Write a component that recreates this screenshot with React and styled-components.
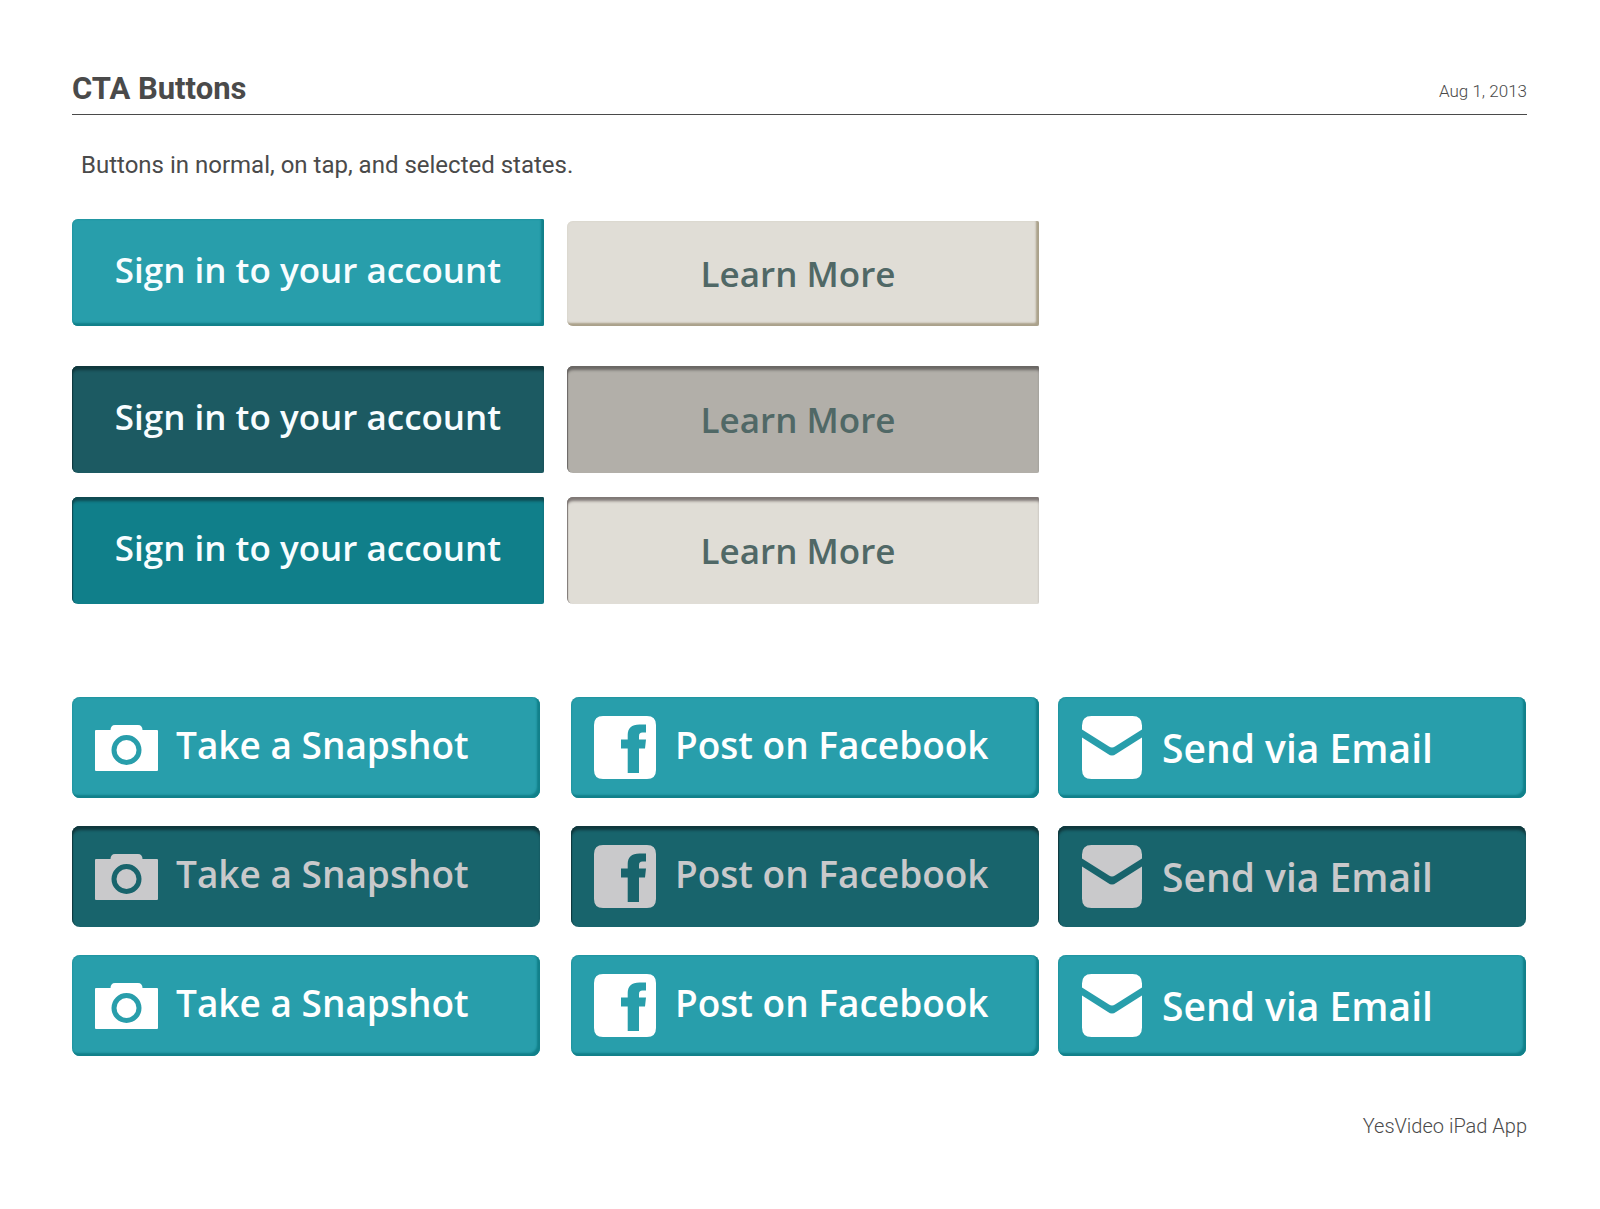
import React from "react";
import styled, { createGlobalStyle, css } from "styled-components";

const GlobalStyle = createGlobalStyle`
  * {
    box-sizing: border-box;
  }
  body {
    margin: 0;
    background: #ffffff;
  }
`;

const Page = styled.main`
  padding: 69px 73px 60px 72px;
  font-family: "Roboto", "Liberation Sans", sans-serif;
  color: #4a4a4a;
`;

const Header = styled.header`
  display: flex;
  justify-content: space-between;
  align-items: center;
  padding-bottom: 5px;
  border-bottom: 1px solid #4a4a4a;
`;

const Title = styled.h1`
  margin: 0;
  font-size: 31px;
  line-height: 40px;
  font-weight: 700;
`;

const DateText = styled.time`
  padding-top: 4px;
  font-size: 17px;
  line-height: 24px;
  font-weight: 300;
`;

const Intro = styled.p`
  margin: 35px 0 39px;
  padding-left: 9px;
  font-size: 24px;
  line-height: 30px;
  font-weight: 400;
`;

const AccountGrid = styled.section`
  display: grid;
  grid-template-columns: 472fr 472fr 465fr;
  column-gap: 23px;
`;

const Column = styled.div`
  display: flex;
  flex-direction: column;
  gap: 24px;
  padding-top: ${({ $inset }) => ($inset ? "2px" : "0")};

  & > button:first-child {
    margin-bottom: 16px;
  }
`;

const ShareList = styled.section`
  display: flex;
  flex-direction: column;
  gap: 28px;
  margin-top: 93px;
  padding-right: 1px;
`;

const ShareRow = styled.div`
  display: flex;
  gap: 19px;

  & > button:first-child {
    margin-right: 12px;
  }
`;

const raised = (edge, rim) => css`
  box-shadow: inset -3px -3px 2px ${edge}, inset 0 0 2px ${rim};
`;

const sunken = (edge) => css`
  box-shadow: inset 0 5px 3px -1px ${edge}, inset 1px 1px 1px ${edge};
`;

const palettes = {
  teal: {
    normal: css`
      background: #289eab;
      color: #f8fdff;
      ${raised("#11808a", "#11808a")}
    `,
    tap: css`
      background: #1c5a62;
      color: #f8fdff;
      ${sunken("#10383d")}
    `,
    selected: css`
      background: #107f8a;
      color: #f8fdff;
      ${sunken("#0f4a51")}
    `,
  },
  stone: {
    normal: css`
      background: #e0ddd6;
      color: #506866;
      ${raised("#aaa18b", "#d2cec2")}
    `,
    tap: css`
      background: #b2afa9;
      color: #506866;
      ${sunken("#6a6764")}
    `,
    selected: css`
      background: #e0ddd6;
      color: #506866;
      ${sunken("#7f7876")}
    `,
  },
  share: {
    normal: css`
      background: #289eab;
      color: #ffffff;
      ${raised("#11808a", "#11808a")}
    `,
    tap: css`
      background: #18646c;
      color: #c9c9cb;
      ${sunken("#10383d")}
    `,
    selected: css`
      background: #289eab;
      color: #ffffff;
      ${raised("#11808a", "#11808a")}
    `,
  },
};

const BaseButton = styled.button`
  display: flex;
  align-items: center;
  border: none;
  font-family: "Open Sans", "Noto Sans", sans-serif;
  font-weight: 600;
  white-space: nowrap;
  cursor: pointer;
  ${({ $palette, $state }) => palettes[$palette][$state]}
`;

const AccountButton = styled(BaseButton)`
  justify-content: center;
  height: 107px;
  padding: 0 0 6px;
  border-radius: 6px 2px 2px 6px;
  font-size: 35px;
  line-height: 48px;
`;

const LearnButton = styled(AccountButton)`
  height: ${({ $state }) => ($state === "normal" ? "105px" : "107px")};
  padding: 0 10px 0 0;
`;

const ShareButton = styled(BaseButton)`
  flex: 1 1 0;
  gap: 18px;
  height: 101px;
  padding: 0 23px;
  border-radius: 8px;
`;

const ShareLabel = styled.span`
  padding-bottom: ${({ $large }) => ($large ? "0" : "5px")};
  font-size: ${({ $large }) => ($large ? "39px" : "37px")};
  line-height: 48px;
`;

const Icon = styled.svg`
  flex: none;
  width: 63px;
  height: 63px;
  fill: currentColor;
`;

const Footer = styled.footer`
  margin-top: 58px;
  font-size: 20px;
  line-height: 24px;
  font-weight: 300;
  text-align: right;
`;

const CameraIcon = () => (
  <Icon viewBox="0 0 63 63" aria-hidden="true">
    <path
      fillRule="evenodd"
      d="M1 14H15.5C15.500 11 17 9 20 9H43C46 9 47.500 11 47.500 14H62Q63 14 63 15V54Q63 55 62 55H1Q0 55 0 54V15Q0 14 1 14ZM31.500 19A15 15 0 1 0 31.500 49A15 15 0 1 0 31.500 19Z"
    />
    <circle cx="31.500" cy="34" r="10" />
  </Icon>
);

const FacebookIcon = () => (
  <Icon viewBox="0 0 63 63" aria-hidden="true">
    <path
      fillRule="evenodd"
      d="M9 0H53Q62 0 62 9V54Q62 63 53 63H9Q0 63 0 54V9Q0 0 9 0ZM33.700 57H45V32.500H51L52 23.500H45V20.500C45 17.500 46 16.500 48.500 16.500H52V8.500H45.500C37.500 8.500 33.700 12.500 33.700 19V23.500H27V32.500H33.700Z"
    />
  </Icon>
);

const MailIcon = () => (
  <Icon viewBox="-1 0 63 63" aria-hidden="true">
    <path d="M0 13.500V9.500Q0 0 9.500 0H50.500Q60 0 60 9.500V13.500L33 30.500Q30 32.500 27 30.500Z" />
    <path d="M0 21.500L26 38Q30 41 34 38L60 21.500V53.500Q60 63 50.500 63H9.500Q0 63 0 53.500Z" />
  </Icon>
);

const states = ["normal", "tap", "selected"];

const shareActions = [
  { label: "Take a Snapshot", Glyph: CameraIcon },
  { label: "Post on Facebook", Glyph: FacebookIcon },
  { label: "Send via Email", Glyph: MailIcon, large: true },
];

const App = () => {
  return (
    <>
      <GlobalStyle />
      <Page>
        <Header>
          <Title>CTA Buttons</Title>
          <DateText dateTime="2013-08-01">Aug 1, 2013</DateText>
        </Header>
        <Intro>Buttons in normal, on tap, and selected states.</Intro>

        <AccountGrid>
          <Column>
            {states.map((state) => (
              <AccountButton key={state} type="button" $palette="teal" $state={state}>
                Sign in to your account
              </AccountButton>
            ))}
          </Column>
          <Column $inset>
            {states.map((state) => (
              <LearnButton key={state} type="button" $palette="stone" $state={state}>
                Learn More
              </LearnButton>
            ))}
          </Column>
        </AccountGrid>

        <ShareList>
          {states.map((state) => (
            <ShareRow key={state}>
              {shareActions.map(({ label, Glyph, large }) => (
                <ShareButton key={label} type="button" $palette="share" $state={state}>
                  <Glyph />
                  <ShareLabel $large={large}>{label}</ShareLabel>
                </ShareButton>
              ))}
            </ShareRow>
          ))}
        </ShareList>

        <Footer>YesVideo iPad App</Footer>
      </Page>
    </>
  );
};

export default App;
